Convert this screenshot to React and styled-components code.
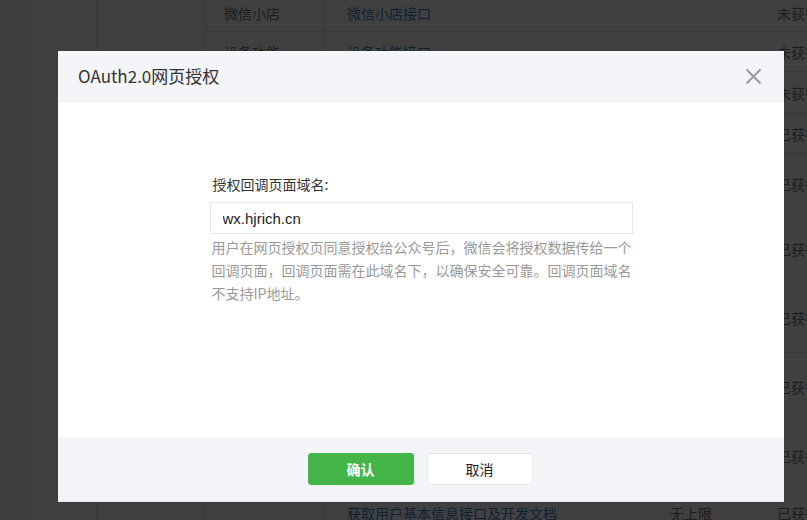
import styled, { createGlobalStyle } from 'styled-components'

const GlobalStyle = createGlobalStyle`
  html, body {
    margin: 0;
    padding: 0;
    background: #fff;
  }
  body {
    font-family: "Noto Sans CJK SC", "Liberation Sans", sans-serif;
    font-size: 14px;
    color: #333;
  }
  * {
    box-sizing: border-box;
  }
`

const rows = [
  { h: 37, cat: '微信小店', api: '微信小店接口', status: '未获得' },
  { h: 40, cat: '设备功能', api: '设备功能接口', status: '未获得' },
  { h: 42, cat: '', api: '', status: '未获得' },
  { h: 40, cat: '', api: '', status: '已获得' },
  { h: 60, cat: '', api: '', status: '已获得' },
  { h: 70, cat: '', api: '', status: '已获得' },
  { h: 69, cat: '', api: '', status: '已获得' },
  { h: 68, cat: '', api: '', status: '已获得' },
  { h: 70, cat: '', api: '', status: '已获得' },
  { h: 44, cat: '', api: '获取用户基本信息接口及开发文档', status: '已获得', extra: '无上限' },
]

const App = () => {
  return <>
    <GlobalStyle />
    <Page>
      <Sidebar />
      <SubNav />
      <Table>
        {rows.map((r, i) => <Row key={i} style={{ height: r.h }}>
          <CatCell>{r.cat}</CatCell>
          <ApiCell>{r.api}</ApiCell>
          <LimitCell>{r.extra}</LimitCell>
          <StatusCell>{r.status}</StatusCell>
        </Row>)}
      </Table>
    </Page>
    <Overlay>
      <Dialog>
        <Header>
          <Title>OAuth2.0网页授权</Title>
          <Close aria-label="close">
            <svg width="17" height="17" viewBox="0 0 17 17">
              <path d="M1.5 1.5 L15.5 15.5 M15.5 1.5 L1.5 15.5" stroke="#9a9a9a" strokeWidth="2" fill="none" />
            </svg>
          </Close>
        </Header>
        <Body>
          <Form>
            <Label>授权回调页面域名:</Label>
            <Input defaultValue="wx.hjrich.cn" />
            <Help>
              用户在网页授权页同意授权给公众号后，微信会将授权数据传给一个回调页面，回调页面需在此域名下，以确保安全可靠。回调页面域名不支持IP地址。
            </Help>
          </Form>
        </Body>
        <Footer>
          <Button primary>确认</Button>
          <Button>取消</Button>
        </Footer>
      </Dialog>
    </Overlay>
  </>
}

const Page = styled.div`
  display: flex;
  width: 807px;
  height: 520px;
  overflow: hidden;
  background: #fff;
`

const Sidebar = styled.div`
  width: 97px;
  flex: none;
  border-left: 30px solid #f5f5f5;
  border-right: 1px solid #e6e6e6;
`

const SubNav = styled.div`
  width: 108px;
  flex: none;
  border-right: 1px solid #e6e6e6;
`

const Table = styled.div`
  flex: 1;
  display: flex;
  flex-direction: column;
  margin-top: -5px;
`

const Row = styled.div`
  display: flex;
  align-items: center;
  flex: none;
  border-bottom: 1px solid #e4e4e8;
  color: #777;
`

const CatCell = styled.div`
  width: 120px;
  height: 100%;
  display: flex;
  align-items: center;
  padding-left: 19px;
  border-right: 1px solid #e6e6e6;
`

const ApiCell = styled.div`
  width: 320px;
  padding-left: 22px;
  color: #3f84cf;
`

const LimitCell = styled.div`
  width: 130px;
  padding-left: 25px;
`

const StatusCell = styled.div`
  padding-left: 2px;
  white-space: nowrap;
`

const Overlay = styled.div`
  position: fixed;
  inset: 0;
  background: rgba(0, 0, 0, 0.75);
  display: flex;
  align-items: flex-start;
  padding: 51px 0 0 58px;
`

const Dialog = styled.div`
  width: 726px;
  background: #fff;
  display: flex;
  flex-direction: column;
`

const Header = styled.div`
  height: 51px;
  background: #f4f5f9;
  display: flex;
  align-items: center;
  justify-content: space-between;
  padding: 0 20px;
  border-bottom: 1px solid #eef0f3;
`

const Title = styled.h3`
  margin: 0;
  font-size: 17px;
  font-weight: 400;
  color: #333;
  line-height: 24px;
`

const Close = styled.button`
  width: 24px;
  height: 24px;
  padding: 0;
  margin-right: -1px;
  border: 0;
  background: transparent;
  display: flex;
  align-items: center;
  justify-content: center;
  cursor: pointer;
`

const Body = styled.div`
  height: 335px;
  display: flex;
  justify-content: center;
  padding: 72px 0 0 0;
`

const Form = styled.div`
  width: 423px;
  display: flex;
  flex-direction: column;
`

const Label = styled.label`
  font-size: 14px;
  line-height: 20px;
  color: #333;
  padding-left: 3px;
  margin-bottom: 8px;
`

const Input = styled.input`
  height: 32px;
  border: 1px solid #e7e7eb;
  padding: 0 12px;
  font-family: "Liberation Sans", "Noto Sans CJK SC", sans-serif;
  font-size: 15px;
  color: #222;
  outline: none;
`

const Help = styled.p`
  margin: 2px 0 0;
  padding-left: 2px;
  font-size: 14px;
  line-height: 23px;
  color: #999;
`

const Footer = styled.div`
  height: 65px;
  background: #f4f5f9;
  display: flex;
  align-items: center;
  justify-content: center;
  gap: 13px;
  padding-right: 2px;
  border-bottom: 1px solid #e8e8ee;
`

const Button = styled.button`
  width: 106px;
  height: 32px;
  border-radius: 3px;
  font-family: "Noto Sans CJK SC", "Liberation Sans", sans-serif;
  font-size: 14px;
  cursor: pointer;
  border: 1px solid ${p => p.primary ? '#44b549' : '#e4e8eb'};
  background: ${p => p.primary ? '#44b549' : '#fff'};
  color: ${p => p.primary ? '#fff' : '#222'};
  font-weight: ${p => p.primary ? 600 : 400};
`

export default App
